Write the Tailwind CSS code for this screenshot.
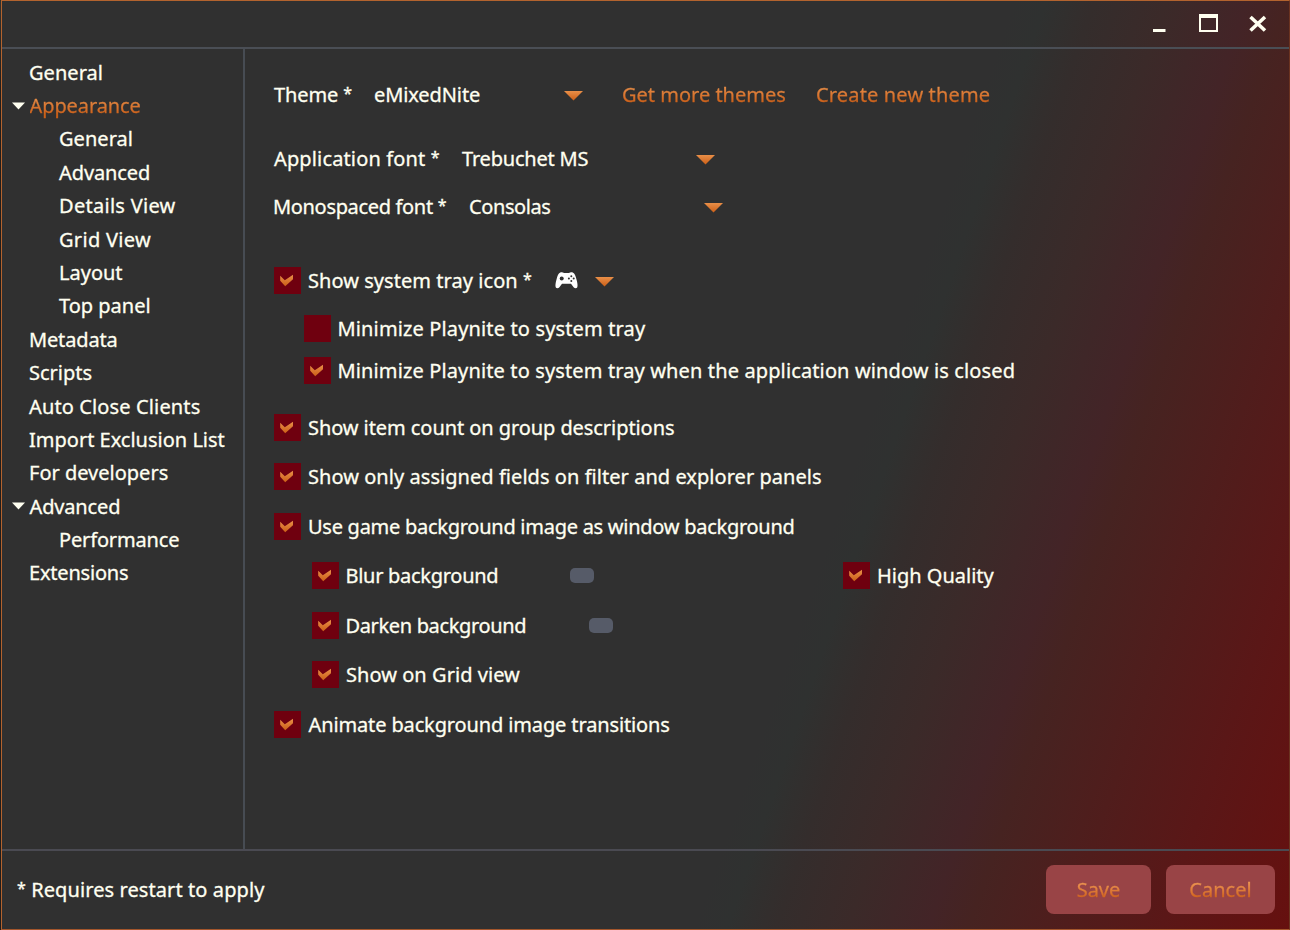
<!DOCTYPE html>
<html lang="en">
<head>
<meta charset="utf-8">
<title>Settings</title>
<script src="https://cdn.jsdelivr.net/npm/@tailwindcss/browser@4"></script>
</head>
<body class="h-[930px] w-[1290px] overflow-hidden bg-[#191919]">
<svg class="absolute size-0" aria-hidden="true">
  <defs>
    <linearGradient id="orange" x1="0" y1="0" x2="0" y2="1"><stop offset="0" stop-color="#e98f48"/><stop offset="1" stop-color="#cb5f17"/></linearGradient>
    <symbol id="check" viewBox="0 0 27 27"><path fill="url(#orange)" d="M6.2 8.8 L10.8 13.2 L19 7.8 V12.3 L11.2 19.2 L6.2 13.8 Z"/></symbol>
    <symbol id="arrow" viewBox="0 0 19 10"><path fill="url(#orange)" d="M0 0 H19 L9.5 9.5 Z"/></symbol>
  </defs>
</svg>
<div class="flex h-full w-full bg-linear-to-b from-[#33302c] from-1% via-[#211d1b] via-10% to-[#201c1b] pl-px">
<div class="flex h-full w-full flex-col border [border-color:#b3632e_#6b3320_#a4562c_#b3632e] bg-[linear-gradient(109deg,#303030_0%,#303030_63%,#2f3130_65%,#342d2c_68%,#3b2a29_72.5%,#432427_77.5%,#462321_80%,#5a1717_92%,#66100f_100%)] [font-family:'Noto_Sans',sans-serif] text-[20px] leading-[27px] whitespace-pre text-[#fffff0] [-webkit-text-stroke-width:0.3px]">

  <header class="flex h-[48px] shrink-0 items-start justify-end border-b-2 border-[#4a4e55] pt-[13px] pr-[22px]">
    <svg class="h-[20px] w-[16px]" viewBox="0 0 16 20"><path fill="currentColor" d="M1 15h12.5v3H1z"/></svg>
    <svg class="ml-[31px] h-[20px] w-[20px]" viewBox="0 0 20 20"><path fill="currentColor" fill-rule="evenodd" d="M0 0h19v18H0zM2 4v12h15V4z"/></svg>
    <svg class="ml-[30px] h-[20px] w-[18px]" viewBox="0 0 18 20"><path stroke="currentColor" stroke-width="3.6" d="M1.5 3 L16 16.5 M16 3 L1.5 16.5"/></svg>
  </header>

  <div class="flex min-h-0 flex-1">
    <nav class="flex w-[243px] shrink-0 flex-col border-r-2 border-[#474c53] pt-[6.84px] pl-[27px] leading-[33.38px]">
      <div class="tracking-[0.05px]">General</div>
      <div class="-ml-[17px] flex items-center gap-[4.5px]">
        <svg class="h-[8px] w-[13px]" viewBox="0 0 13 8"><path fill="currentColor" d="M0 .5h13L6.5 7.5z"/></svg>
        <span class="bg-linear-to-b from-[#e98f48] from-25% to-[#cb5f17] to-75% bg-clip-text tracking-[-0.1px] text-transparent">Appearance</span>
      </div>
      <div class="flex flex-col pl-[30px]">
        <div class="mb-[0.88px] leading-[32.5px] tracking-[0.05px]">General</div>
        <div class="tracking-[-0.1px]">Advanced</div>
        <div class="tracking-[0.28px]">Details View</div>
        <div class="tracking-[0.3px]">Grid View</div>
        <div>Layout</div>
        <div>Top panel</div>
      </div>
      <div class="tracking-[-0.15px]">Metadata</div>
      <div>Scripts</div>
      <div class="tracking-[0.13px]">Auto Close Clients</div>
      <div>Import Exclusion List</div>
      <div>For developers</div>
      <div class="-ml-[17px] flex items-center gap-[4.5px]">
        <svg class="h-[8px] w-[13px]" viewBox="0 0 13 8"><path fill="currentColor" d="M0 .5h13L6.5 7.5z"/></svg>
        <span class="tracking-[-0.15px]">Advanced</span>
      </div>
      <div class="pl-[30px] tracking-[-0.15px]">Performance</div>
      <div class="tracking-[-0.2px]">Extensions</div>
    </nav>

    <main class="flex flex-1 flex-col pt-[32px] pl-[29px]">
      <div class="flex h-[27px] items-center">
        <span class="w-[100px] tracking-[-0.1px]">Theme <span class="align-[3px] text-[16px] leading-none">*</span></span>
        <span class="w-[190px] tracking-[-0.1px]">eMixedNite</span>
        <svg class="mt-0.5 h-[10px] w-[19px]"><use href="#arrow"/></svg>
        <span class="ml-[39px] w-[194px] bg-linear-to-b from-[#e98f48] from-20% to-[#cb5f17] to-80% bg-clip-text text-transparent">Get more themes</span>
        <span class="bg-linear-to-b from-[#e98f48] from-20% to-[#cb5f17] to-80% bg-clip-text tracking-[0.16px] text-transparent">Create new theme</span>
      </div>
      <div class="mt-[37px] flex h-[27px] items-center">
        <span class="w-[188px] tracking-[0.14px]">Application font <span class="align-[3px] text-[16px] leading-none">*</span></span>
        <span class="w-[234px] tracking-[-0.2px]">Trebuchet MS</span>
        <svg class="mt-0.5 h-[10px] w-[19px]"><use href="#arrow"/></svg>
      </div>
      <div class="mt-[21px] flex h-[27px] items-center">
        <span class="-ml-px w-[196px] tracking-[-0.33px]">Monospaced font <span class="align-[3px] text-[16px] leading-none">*</span></span>
        <span class="w-[235px] tracking-[-0.4px]">Consolas</span>
        <svg class="mt-0.5 h-[10px] w-[19px]"><use href="#arrow"/></svg>
      </div>

      <div class="mt-[47px] flex h-[27px] items-center">
        <svg class="size-[27px] bg-[#6f000f]"><use href="#check"/></svg>
        <span class="ml-[7px] w-[247px] tracking-[0.05px]">Show system tray icon <span class="align-[3px] text-[16px] leading-none">*</span></span>
        <svg class="h-[17px] w-[23px]" viewBox="0 0 23 17">
          <path fill="#fff" d="M5.2.6 C6.6 0 8 .2 9 1 H14 C15 .2 16.4 0 17.8.6 C19.8 1.8 20.6 4 21.5 7.4 C22.4 10.6 22.9 13.5 22.3 15.2 C21.5 16.8 19.8 16.6 18.6 15.2 L16 11.8 H7 L4.4 15.2 C3.2 16.6 1.5 16.8.7 15.2 C.1 13.5.6 10.6 1.5 7.4 C2.4 4 3.2 1.8 5.2.6 Z"/>
          <g fill="#303030"><circle cx="6.7" cy="6.6" r="2"/><circle cx="16.3" cy="4.2" r="1"/><circle cx="16.3" cy="9" r="1"/><circle cx="13.9" cy="6.6" r="1"/><circle cx="18.7" cy="6.6" r="1"/></g>
        </svg>
        <svg class="mt-0.5 ml-[17px] h-[10px] w-[19px]"><use href="#arrow"/></svg>
      </div>
      <div class="mt-[21px] flex h-[27px] items-center gap-[6.5px] pl-[30px]">
        <span class="size-[27px] bg-[#6f000f]"></span>
        <span class="tracking-[0.14px]">Minimize Playnite to system tray</span>
      </div>
      <div class="mt-[15px] flex h-[27px] items-center gap-[6.5px] pl-[30px]">
        <svg class="size-[27px] bg-[#6f000f]"><use href="#check"/></svg>
        <span class="tracking-[0.13px]">Minimize Playnite to system tray when the application window is closed</span>
      </div>
      <div class="mt-[30px] flex h-[27px] items-center gap-[7px]">
        <svg class="size-[27px] bg-[#6f000f]"><use href="#check"/></svg>
        <span class="tracking-[-0.07px]">Show item count on group descriptions</span>
      </div>
      <div class="mt-[22px] flex h-[27px] items-center gap-[7px]">
        <svg class="size-[27px] bg-[#6f000f]"><use href="#check"/></svg>
        <span class="tracking-[0.05px]">Show only assigned fields on filter and explorer panels</span>
      </div>
      <div class="mt-[23px] flex h-[27px] items-center gap-[7px]">
        <svg class="size-[27px] bg-[#6f000f]"><use href="#check"/></svg>
        <span class="tracking-[-0.265px]">Use game background image as window background</span>
      </div>
      <div class="mt-[22px] flex h-[27px] items-center pl-[38px]">
        <svg class="size-[27px] bg-[#6f000f]"><use href="#check"/></svg>
        <span class="ml-[6.5px] w-[224.5px] tracking-[-0.28px]">Blur background</span>
        <span class="h-[15px] w-[24px] rounded-[5px] bg-[#565b68]"></span>
        <svg class="ml-[249px] size-[27px] bg-[#6f000f]"><use href="#check"/></svg>
        <span class="ml-[7px]">High Quality</span>
      </div>
      <div class="mt-[23px] flex h-[27px] items-center pl-[38px]">
        <svg class="size-[27px] bg-[#6f000f]"><use href="#check"/></svg>
        <span class="ml-[6.5px] w-[243.5px] tracking-[-0.35px]">Darken background</span>
        <span class="h-[15px] w-[24px] rounded-[5px] bg-[#565b68]"></span>
      </div>
      <div class="mt-[22px] flex h-[27px] items-center gap-[7px] pl-[38px]">
        <svg class="size-[27px] bg-[#6f000f]"><use href="#check"/></svg>
        <span class="tracking-[0.05px]">Show on Grid view</span>
      </div>
      <div class="mt-[23px] flex h-[27px] items-center gap-[7.5px]">
        <svg class="size-[27px] bg-[#6f000f]"><use href="#check"/></svg>
        <span class="tracking-[-0.13px]">Animate background image transitions</span>
      </div>
    </main>
  </div>

  <footer class="flex h-[80px] shrink-0 items-center gap-[15px] border-t-2 border-[#4a4a52] pr-[14px] pb-[2px] pl-[15px]">
    <span class="mr-auto tracking-[0.09px]"><span class="align-[3px] text-[16px] leading-none">*</span> Requires restart to apply</span>
    <button class="flex h-[49px] w-[105px] items-center justify-center rounded-lg bg-[#994446]"><span class="bg-linear-to-b from-[#f09a55] from-20% to-[#d0621a] to-80% bg-clip-text text-transparent">Save</span></button>
    <button class="flex h-[49px] w-[109px] items-center justify-center rounded-lg bg-[#994446]"><span class="bg-linear-to-b from-[#f09a55] from-20% to-[#d0621a] to-80% bg-clip-text text-transparent">Cancel</span></button>
  </footer>
</div>
</div>
</body>
</html>
